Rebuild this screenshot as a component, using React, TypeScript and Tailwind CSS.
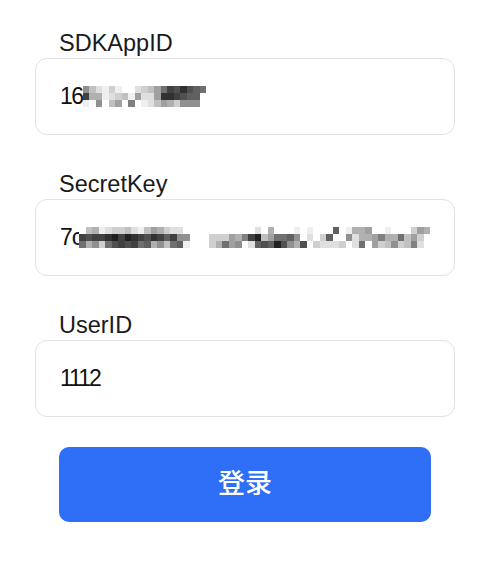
const font = { fontFamily: '"Liberation Sans", Arial, "Noto Sans CJK SC", sans-serif' };

// pixelated (mosaic) parts of the hidden values, one hex digit per block: 0 = black, f = white
const appIdMosaic = [
  '8bdeceffdcb96342456',
  '3aaedcbe9dd9223455',
  'ef8fb9f7fedb9ac888',
];

const secretMosaicA = [
  'fbaedccbdeb9acddf',
  '34332131234235388',
  '6a8c6434365a8b65e',
];

const secretMosaicB = [
  'ffffffffdfafffefefff5feaa9ffefffc9a',
  'fccc9a731b96658fdfc5ff8daa97aa6b9cf',
  'fca698fd545148a4fcdddcfd6f9cb8cb7df',
];

function Mosaic({ rows }: { rows: string[] }) {
  return (
    <div className="flex flex-col">
      {rows.map((row, i) => (
        <div key={i} className="flex">
          {row.split('').map((c, j) => {
            const v = Math.round((parseInt(c, 16) / 15) * 238 + 17);
            return (
              <div
                key={j}
                className="w-[6.5px] h-[7px]"
                style={{ backgroundColor: `rgb(${v},${v},${v})` }}
              />
            );
          })}
        </div>
      ))}
    </div>
  );
}

function Field({ label, first, children }: { label: string; first?: boolean; children: React.ReactNode }) {
  return (
    <div className={first ? '' : 'mt-[34px]'}>
      <div className="pl-6 text-[23.5px] leading-[30px] text-[#1a1a1a]">{label}</div>
      <div className="w-[420px] h-[77px] rounded-[12px] border-[1.5px] border-[#e2e2e2] bg-white flex items-center pl-6 overflow-hidden">
        {children}
      </div>
    </div>
  );
}

export default function App() {
  return (
    <div className="min-h-[566px] bg-white pt-[28px] pl-[35px]" style={font}>
      <Field label="SDKAppID" first>
        <span className="text-[23px] tracking-[-1.5px] text-[#111]">16</span>
        <Mosaic rows={appIdMosaic} />
      </Field>

      <Field label="SecretKey">
        <span className="text-[23px] tracking-[-1px] text-[#111]">7c</span>
        <div className="-ml-[3px]">
          <Mosaic rows={secretMosaicA} />
        </div>
        <div className="ml-[13px]">
          <Mosaic rows={secretMosaicB} />
        </div>
      </Field>

      <Field label="UserID">
        <span className="text-[23px] tracking-[-2px] text-[#111]">1112</span>
      </Field>

      <button className="mt-[30px] ml-6 w-[372px] h-[75px] rounded-[10px] bg-[#2f6ef6] text-white text-[27px] font-medium">
        登录
      </button>
    </div>
  );
}
